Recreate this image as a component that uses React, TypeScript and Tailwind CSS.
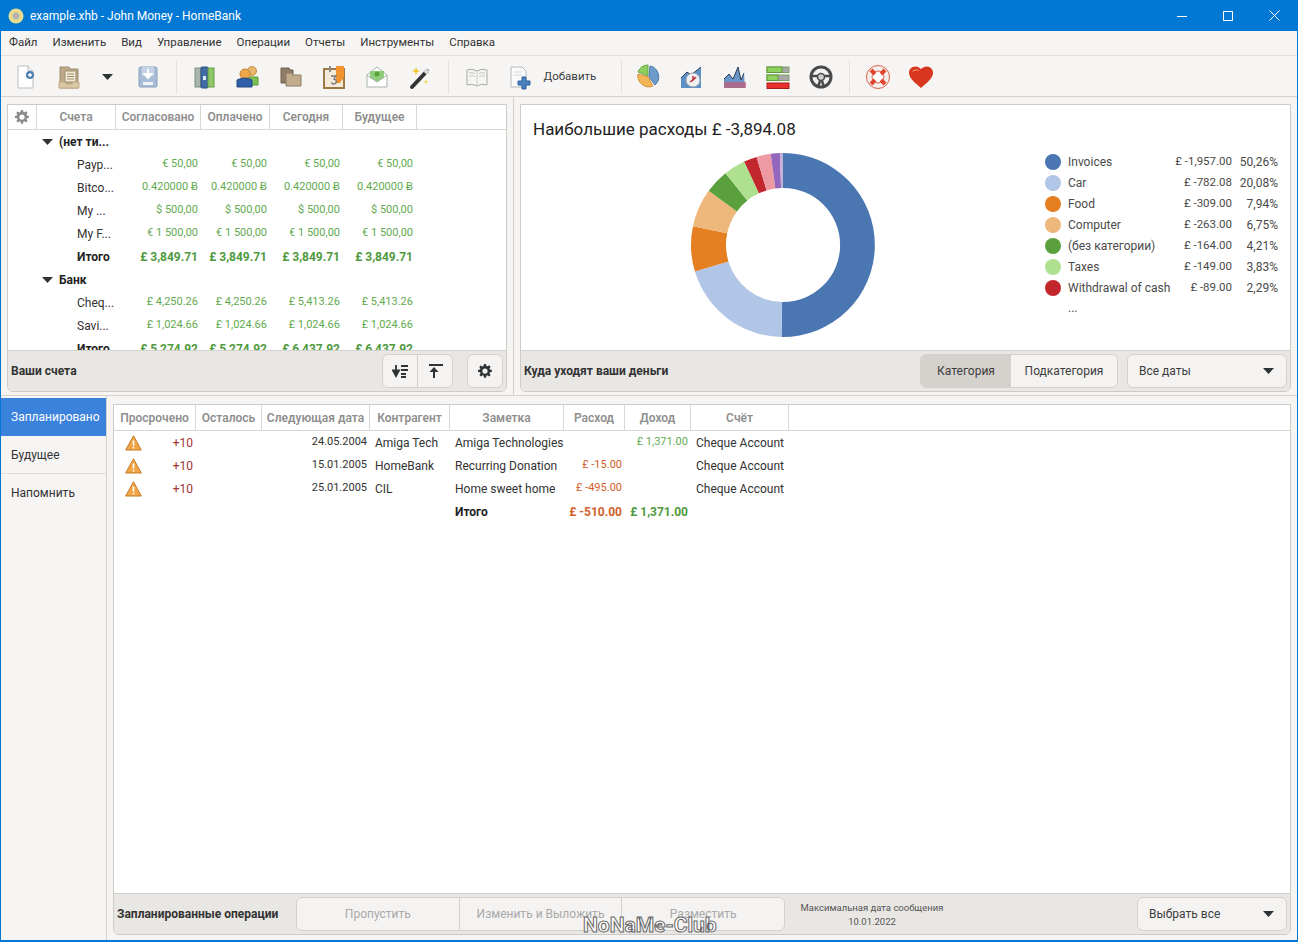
import {ReactNode} from 'react'

const FONT = "font-['Roboto','Noto_Sans',sans-serif]"

const slices = [
	{pct: 50.26, color: '#4a76b2'},
	{pct: 20.08, color: '#b1c6e6'},
	{pct: 7.94, color: '#e67e22'},
	{pct: 6.75, color: '#eeb77c'},
	{pct: 4.21, color: '#5aa03c'},
	{pct: 3.83, color: '#aee08f'},
	{pct: 2.29, color: '#c2272d'},
	{pct: 2.5, color: '#ee9aa2'},
	{pct: 1.6, color: '#9467bd'},
	{pct: 0.54, color: '#c5b0d5'},
]

const legend = [
	['Invoices', '£ -1,957.00', '50,26%', '#4a76b2'],
	['Car', '£ -782.08', '20,08%', '#b1c6e6'],
	['Food', '£ -309.00', '7,94%', '#e67e22'],
	['Computer', '£ -263.00', '6,75%', '#eeb77c'],
	['(без категории)', '£ -164.00', '4,21%', '#5aa03c'],
	['Taxes', '£ -149.00', '3,83%', '#aee08f'],
	['Withdrawal of cash', '£ -89.00', '2,29%', '#c2272d'],
]

const accounts: {name: string; vals: string[]; kind: 'group' | 'row' | 'total'}[] = [
	{name: '(нет ти...', vals: [], kind: 'group'},
	{name: 'Payp...', vals: ['€ 50,00', '€ 50,00', '€ 50,00', '€ 50,00'], kind: 'row'},
	{name: 'Bitco...', vals: ['0.420000 Ƀ', '0.420000 Ƀ', '0.420000 Ƀ', '0.420000 Ƀ'], kind: 'row'},
	{name: 'My ...', vals: ['$ 500,00', '$ 500,00', '$ 500,00', '$ 500,00'], kind: 'row'},
	{name: 'My F...', vals: ['€ 1 500,00', '€ 1 500,00', '€ 1 500,00', '€ 1 500,00'], kind: 'row'},
	{name: 'Итого', vals: ['£ 3,849.71', '£ 3,849.71', '£ 3,849.71', '£ 3,849.71'], kind: 'total'},
	{name: 'Банк', vals: [], kind: 'group'},
	{name: 'Cheq...', vals: ['£ 4,250.26', '£ 4,250.26', '£ 5,413.26', '£ 5,413.26'], kind: 'row'},
	{name: 'Savi...', vals: ['£ 1,024.66', '£ 1,024.66', '£ 1,024.66', '£ 1,024.66'], kind: 'row'},
	{name: 'Итого', vals: ['£ 5,274.92', '£ 5,274.92', '£ 6,437.92', '£ 6,437.92'], kind: 'total'},
]

const scheduled = [
	['24.05.2004', 'Amiga Tech', 'Amiga Technologies', '', '£ 1,371.00'],
	['15.01.2005', 'HomeBank', 'Recurring Donation', '£ -15.00', ''],
	['25.01.2005', 'CIL', 'Home sweet home', '£ -495.00', ''],
]

const arc = (start: number, end: number) => {
	const R = 92
	const r = 57
	const c = 94
	const p = (a: number, rad: number) => {
		const t = (a / 100) * Math.PI * 2
		return (c + rad * Math.sin(t)).toFixed(2) + ' ' + (c - rad * Math.cos(t)).toFixed(2)
	}
	const large = end - start > 50 ? 1 : 0
	return 'M' + p(start, R) + 'A92 92 0 ' + large + ' 1 ' + p(end, R) + 'L' + p(end, r) + 'A57 57 0 ' + large + ' 0 ' + p(start, r) + 'Z'
}

const Donut = () => {
	let at = 0
	return (
		<svg width="188" height="188" viewBox="0 0 188 188" className="mt-[9px] ml-[156px] block">
			{slices.map((s) => {
				const d = arc(at, at + s.pct)
				at += s.pct
				return <path key={s.color} d={d} fill={s.color} />
			})}
		</svg>
	)
}

const Caret = ({className = ''}: {className?: string}) => (
	<svg width="11" height="6" viewBox="0 0 11 6" className={className}>
		<path d="M0 0h11L5.5 6z" fill="#2e3436" />
	</svg>
)

const Gear = ({size, color}: {size: number; color: string}) => (
	<svg width={size} height={size} viewBox="0 0 16 16">
		<path
			fill={color}
			fillRule="evenodd"
			d="M6.8 0h2.4l.4 2.2 1.2.5 1.9-1.3 1.7 1.7-1.3 1.9.5 1.2 2.2.4v2.4l-2.2.4-.5 1.2 1.3 1.9-1.7 1.7-1.9-1.3-1.2.5-.4 2.2H6.8l-.4-2.2-1.2-.5-1.9 1.3-1.7-1.7 1.3-1.9-.5-1.2L0 9.200V6.800l2.2-.4.5-1.2L1.400 3.300l1.700-1.700 1.900 1.300 1.200-.5zM8 5a3 3 0 100 6 3 3 0 000-6z"
		/>
	</svg>
)

const Icon = ({children}: {children: ReactNode}) => (
	<svg width="26" height="26" viewBox="0 0 26 26">
		{children}
	</svg>
)

const Slot = ({children, className = ''}: {children: ReactNode; className?: string}) => (
	<div className={'flex h-full w-[43px] shrink-0 items-center justify-center ' + className}>{children}</div>
)

const Sep = ({className = ''}: {className?: string}) => <div className={'h-[34px] w-px shrink-0 bg-[#e3e2e0] ' + className} />

const Toolbar = () => (
	<div className="flex h-[41px] shrink-0 items-center border-b border-[#d4d2cf] pt-[2px] pl-[3.5px]">
		<Slot>
			<Icon>
				<path d="M5 2h10l5 5v17H5z" fill="#fff" stroke="#b9bcc0" />
				<path d="M15 2v5h5" fill="#eef0f2" stroke="#b9bcc0" />
				<circle cx="17" cy="11" r="4" fill="#4f7fb0" />
				<path d="M15 11h4M17 9v4" stroke="#fff" strokeWidth="1.300" />
			</Icon>
		</Slot>
		<Slot>
			<Icon>
				<path d="M4 3h9l1 2h8v19H4z" fill="#bba988" stroke="#a08d6c" />
				<rect x="9" y="7" width="11" height="11" fill="#f2ead8" stroke="#a08d6c" />
				<path d="M11 10h7M11 12.500h7M11 15h7" stroke="#a08d6c" />
				<path d="M3 18h6l1 2h6l1-2h6v6H3z" fill="#d9c8a6" stroke="#c2aa85" />
			</Icon>
		</Slot>
		<div className="flex h-full w-[33px] shrink-0 items-center justify-center">
			<Caret />
		</div>
		<Slot className="ml-[3px]">
			<Icon>
				<rect x="4" y="3" width="18" height="20" rx="1.500" fill="#a9bcd6" stroke="#8aa0bf" />
				<rect x="7" y="3" width="12" height="9" fill="#c4d2e4" />
				<path d="M13 5v8M9.500 10l3.500 4 3.500-4z" stroke="#fff" strokeWidth="2" fill="#fff" />
				<rect x="8" y="18" width="10" height="3" fill="#eef2f7" />
			</Icon>
		</Slot>
		<Sep className="ml-[6px]" />
		<Slot className="ml-[7px]">
			<Icon>
				<rect x="3" y="4" width="6" height="19" fill="#a8b4ac" stroke="#7f8d88" />
				<rect x="9" y="3" width="7" height="21" rx="1" fill="#3f6ca6" stroke="#2c4f7d" />
				<rect x="16" y="4" width="6" height="19" fill="#8fc76a" stroke="#659a46" />
				<rect x="11" y="12" width="3" height="4" fill="#dfe8f2" />
			</Icon>
		</Slot>
		<Slot>
			<Icon>
				<circle cx="17" cy="7" r="4.500" fill="#e8b56d" stroke="#c68f45" />
				<path d="M12 13h11v8H12z" fill="#7cc152" stroke="#5a9a38" />
				<circle cx="10" cy="10" r="5" fill="#eda84b" stroke="#c6812a" />
				<path d="M2 16q8-4 15 0v7H2z" fill="#2f5fa8" stroke="#24497f" />
			</Icon>
		</Slot>
		<Slot>
			<Icon>
				<path d="M3 4h8l1 2h3v13H3z" fill="#8f7d67" stroke="#6f604e" />
				<path d="M8 9h6l1 2h8v11H8z" fill="#c0ab8c" stroke="#8e7c62" />
			</Icon>
		</Slot>
		<Slot>
			<Icon>
				<rect x="3" y="5" width="20" height="19" fill="#f3ead9" stroke="#9c7a45" strokeWidth="2" />
				<path d="M15 2h8v11l-4 6h-4z" fill="#f2932e" />
				<rect x="8" y="2" width="2" height="6" fill="#8c8c8c" />
				<path d="M10 12h5l-2 3a2.500 2.500 0 11-2.500 3.500" fill="none" stroke="#777" strokeWidth="1.300" />
			</Icon>
		</Slot>
		<Slot>
			<Icon>
				<path d="M3 11l10-8 10 8v12H3z" fill="#fff" stroke="#a9b3ab" />
				<path d="M6 7h14v7l-7 4-7-4z" fill="#8fce78" />
				<circle cx="13" cy="10" r="2.500" fill="#5aa03c" />
				<path d="M3 11l10 7 10-7" fill="none" stroke="#a9b3ab" />
			</Icon>
		</Slot>
		<Slot>
			<Icon>
				<path d="M5 23L20 7" stroke="#333" strokeWidth="4" strokeLinecap="round" />
				<path d="M18 9l3-3" stroke="#d8d8d8" strokeWidth="4" />
				<path d="M9 3l1 3 3 1-3 1-1 3-1-3-3-1 3-1z" fill="#f0c419" />
				<path d="M19 15l.7 2 2 .7-2 .7-.7 2-.7-2-2-.7 2-.7z" fill="#f0d860" />
			</Icon>
		</Slot>
		<Sep className="ml-[6px]" />
		<Slot className="ml-[7px]">
			<Icon>
				<path d="M13 7Q8 4 3 6v15q5-2 10 1 5-3 10-1V6q-5-2-10 1z" fill="#f6f5f2" stroke="#a9a9a6" />
				<path d="M13 7v15M5 9q3-1 6 .5M5 12q3-1 6 .5M15 9.500q3-1.500 6-.5M15 12.500q3-1.500 6-.5" stroke="#c9c9c6" fill="none" />
			</Icon>
		</Slot>
		<Slot>
			<Icon>
				<path d="M4 3h11l4 4v16H4z" fill="#fbfbfb" stroke="#b4b8bc" />
				<path d="M7 8h8M7 11h8" stroke="#cfd6de" />
				<path d="M15 13h4v4h4v4h-4v4h-4v-4h-4v-4h4z" fill="#4a82c0" stroke="#2f619b" />
			</Icon>
		</Slot>
		<span className="ml-[2px] w-[53px] shrink-0 text-[11.5px] text-[#3d3d3d]">Добавить</span>
		<Sep className="ml-[24px]" />
		<Slot className="ml-[5.500px]">
			<Icon>
				<path d="M12 12V1A11 11 0 002 8z" fill="#8ed05f" stroke="#6aa544" />
				<path d="M14 2a11 11 0 015 19l-6-8z" fill="#6d9ccc" stroke="#4e7cab" />
				<path d="M2 10l10 3 5 9A11 11 0 012 10z" fill="#f3b455" stroke="#d2923a" />
			</Icon>
		</Slot>
		<Slot>
			<Icon>
				<path d="M2 14l6-6 4 3 10-8v21H2z" fill="#5f8fc7" />
				<path d="M2 14l6-6 4 3 10-8" fill="none" stroke="#2d3f56" />
				<circle cx="14" cy="16" r="7" fill="#eef0f2" stroke="#9aa3ac" />
				<path d="M14 12v4l-3 2M14 16l3-3" stroke="#c1272d" strokeWidth="1.500" fill="none" />
			</Icon>
		</Slot>
		<Slot>
			<Icon>
				<path d="M2 15l5-5 4 5 5-12 3 13 3-7 1 15H2z" fill="#6a93c8" />
				<path d="M2 15l5-5 4 5 5-12 3 13 3-7" fill="none" stroke="#2d3f56" />
				<path d="M2 18h22v6H2z" fill="#c2607a" fillOpacity=".75" />
			</Icon>
		</Slot>
		<Slot>
			<Icon>
				<rect x="2" y="3" width="22" height="5.500" fill="#a8a8a8" stroke="#7e9f63" />
				<rect x="2" y="3" width="15" height="5.500" fill="#8fd15e" stroke="#5f9a3d" />
				<rect x="2" y="11" width="22" height="5.500" fill="#a8a8a8" stroke="#7e9f63" />
				<rect x="2" y="11" width="11" height="5.500" fill="#8fd15e" stroke="#5f9a3d" />
				<rect x="2" y="19" width="22" height="5.500" fill="#e8302c" stroke="#a91e1b" />
			</Icon>
		</Slot>
		<Slot>
			<Icon>
				<circle cx="13" cy="13" r="10" fill="#f2f2f2" stroke="#4a4a4a" strokeWidth="3" />
				<circle cx="13" cy="13" r="3.500" fill="#cfcfcf" stroke="#4a4a4a" strokeWidth="1.500" />
				<path d="M3 12l7 0M16 12l7 0M12 17l-2 6M14 17l2 6" stroke="#4a4a4a" strokeWidth="2.500" />
			</Icon>
		</Slot>
		<Sep className="ml-[6.500px]" />
		<Slot className="ml-[7px]">
			<Icon>
				<circle cx="13" cy="13" r="9.500" fill="none" stroke="#f6f0ec" strokeWidth="6" />
				<circle cx="13" cy="13" r="11.500" fill="none" stroke="#d9634f" strokeWidth="1" />
				<circle cx="13" cy="13" r="6" fill="#fff" stroke="#d9634f" strokeWidth="1" />
				<path d="M6 6l4 4M20 6l-4 4M6 20l4-4M20 20l-4-4" stroke="#e2452e" strokeWidth="4" />
			</Icon>
		</Slot>
		<Slot>
			<Icon>
				<path d="M13 24C6 18 1 14 1 8.500 1 4 7-.5 13 5c6-5.500 12-1 12 3.500 0 5.500-5 9.500-12 15.500z" fill="#d8361e" />
				<path d="M4 8c1-3 5-4 8-1-3-1-6 0-8 1z" fill="#ef8f6a" />
			</Icon>
		</Slot>
	</div>
)

const HeadCell = ({children, className = ''}: {children?: ReactNode; className?: string}) => (
	<div className={'flex h-full items-center justify-center border-r border-[#d9d7d4] font-semibold text-[#8f8f8f] ' + className}>{children}</div>
)

const AccountsPanel = () => (
	<div className="flex h-[288px] w-[500px] shrink-0 flex-col overflow-hidden rounded-b-md border border-[#cdcbc8]">
		<div className="h-[25px] shrink-0 border-b border-[#d9d7d4] bg-white">
			<div className="grid h-full w-[409px] grid-cols-[29px_79px_85px_69px_73px_74px]">
				<HeadCell>
					<Gear size={14} color="#8a8a8a" />
				</HeadCell>
				<HeadCell>Счета</HeadCell>
				<HeadCell>Согласовано</HeadCell>
				<HeadCell>Оплачено</HeadCell>
				<HeadCell>Сегодня</HeadCell>
				<HeadCell>Будущее</HeadCell>
			</div>
		</div>
		<div className="min-h-0 flex-1 overflow-hidden bg-white">
			{accounts.map((a, i) => (
				<div key={i} className="grid h-[23px] w-[408px] grid-cols-[108px_85px_69px_73px_73px] items-center">
					{a.kind === 'group' ? (
						<div className="col-span-5 flex items-center pl-[34px] font-bold text-[#222]">
							<Caret />
							<span className="ml-[6px]">{a.name}</span>
						</div>
					) : (
						<>
							<div className={a.kind === 'total' ? 'pl-[69px] font-bold text-[#222]' : 'pl-[69px] text-[#333]'}>{a.name}</div>
							{a.vals.map((v, j) => (
								<div key={j} className={a.kind === 'total' ? 'pr-[3px] text-right font-bold text-[#4f9a3e]' : 'pr-[3px] text-right text-[11px] text-[#62aa50]'}>
									{v}
								</div>
							))}
						</>
					)}
				</div>
			))}
		</div>
		<div className="flex h-[41px] shrink-0 items-center border-t border-[#d3d1ce] bg-[#e9e7e4] pr-[3px] pl-[3px]">
			<span className="flex-1 font-bold text-[#333]">Ваши счета</span>
			<div className="flex h-[34px] w-[71px] overflow-hidden rounded-md border border-[#d3d1ce] bg-[#f4f3f1]">
				<div className="flex flex-1 items-center justify-center border-r border-[#d3d1ce]">
					<svg width="16" height="14" viewBox="0 0 16 14">
						<path d="M4 1v8M1 6.500L4 12l3-5.500zM9 2h7M9 6h7M9 10h5M9 13h5" stroke="#2e3436" strokeWidth="1.800" fill="#2e3436" />
					</svg>
				</div>
				<div className="flex flex-1 items-center justify-center">
					<svg width="15" height="14" viewBox="0 0 15 14">
						<path d="M1 1h14" stroke="#2e3436" strokeWidth="1.800" />
						<path d="M6 6v8" stroke="#2e3436" strokeWidth="2" />
						<path d="M1.500 8L6 3l4.500 5z" fill="#2e3436" />
					</svg>
				</div>
			</div>
			<div className="ml-[14px] flex h-[34px] w-[36px] items-center justify-center rounded-md border border-[#d3d1ce] bg-[#f4f3f1]">
				<Gear size={14} color="#2e3436" />
			</div>
		</div>
	</div>
)

const Select = ({label, width}: {label: string; width: string}) => (
	<div className={'flex h-[34px] items-center justify-between rounded-md border border-[#d3d1ce] bg-[#f4f3f1] pr-[12px] pl-[11px] text-[#3d3d3d] ' + width}>
		<span>{label}</span>
		<Caret />
	</div>
)

const ChartPanel = () => (
	<div className="flex h-[288px] min-w-0 flex-1 flex-col overflow-hidden rounded-b-md border border-[#cdcbc8]">
		<div className="flex min-h-0 flex-1 bg-white">
			<div className="flex-1 pt-[12px] pl-[12px]">
				<div className="h-[25px] text-[17px] leading-[25px] text-[#222]">Наибольшие расходы £ -3,894.08</div>
				<Donut />
			</div>
			<div className="w-[245px] shrink-0 pt-[46px] pr-[12px]">
				{legend.map(([name, amount, pct, color]) => (
					<div key={name} className="flex h-[21px] items-center text-[#4a4a4a]">
						<span className="h-4 w-4 shrink-0 rounded-full" style={{backgroundColor: color}} />
						<span className="ml-[7px] flex-1 whitespace-nowrap">{name}</span>
						<span className="whitespace-nowrap text-[11.5px]">{amount}</span>
						<span className="w-[46px] text-right">{pct}</span>
					</div>
				))}
				<div className="h-[21px] pl-[23px] leading-[21px] text-[#4a4a4a]">...</div>
			</div>
		</div>
		<div className="flex h-[41px] shrink-0 items-center border-t border-[#d3d1ce] bg-[#e9e7e4] pr-[3px] pl-[3px]">
			<span className="flex-1 font-bold text-[#333]">Куда уходят ваши деньги</span>
			<div className="flex h-[34px] w-[198px] overflow-hidden rounded-md border border-[#d3d1ce] text-[#3d3d3d]">
				<div className="flex w-[90px] items-center justify-center bg-[#d5d1cd]">Категория</div>
				<div className="flex flex-1 items-center justify-center bg-[#f4f3f1]">Подкатегория</div>
			</div>
			<Select label="Все даты" width="ml-[9px] w-[160px]" />
		</div>
	</div>
)

const Warn = () => (
	<svg width="17" height="16" viewBox="0 0 17 16">
		<path d="M8.500.8L16.300 15H.7z" fill="#f0a648" stroke="#c47a22" strokeLinejoin="round" />
		<path d="M8.500 5.500v5M8.500 11.800v1.600" stroke="#fff" strokeWidth="1.600" />
	</svg>
)

const SCHED_COLS = 'grid w-[675px] grid-cols-[82px_66px_108px_80px_114px_61px_66px_98px]'

const ScheduledPanel = () => (
	<div className="flex min-w-0 flex-1 flex-col overflow-hidden rounded-b-md border border-[#cdcbc8]">
		<div className="h-[26px] shrink-0 border-b border-[#d9d7d4] bg-white">
			<div className={SCHED_COLS + ' h-full'}>
				<HeadCell>Просрочено</HeadCell>
				<HeadCell>Осталось</HeadCell>
				<HeadCell>Следующая дата</HeadCell>
				<HeadCell>Контрагент</HeadCell>
				<HeadCell>Заметка</HeadCell>
				<HeadCell>Расход</HeadCell>
				<HeadCell>Доход</HeadCell>
				<HeadCell>Счёт</HeadCell>
			</div>
		</div>
		<div className="min-h-0 flex-1 bg-white">
			{scheduled.map((r) => (
				<div key={r[0]} className={SCHED_COLS + ' h-[23px] items-center text-[#333]'}>
					<div className="flex items-center justify-between pr-[3px] pl-[11px] text-[#a33232]">
						<Warn />
						<span>+10</span>
					</div>
					<div />
					<div className="pr-[3px] text-right text-[11px]">{r[0]}</div>
					<div className="pl-[5px]">{r[1]}</div>
					<div className="pl-[5px]">{r[2]}</div>
					<div className="pr-[3px] text-right text-[11px] text-[#d2602a]">{r[3]}</div>
					<div className="pr-[3px] text-right text-[11px] text-[#62aa50]">{r[4]}</div>
					<div className="pl-[5px]">Cheque Account</div>
				</div>
			))}
			<div className={SCHED_COLS + ' h-[23px] items-center font-bold'}>
				<div className="col-span-4" />
				<div className="pl-[5px] text-[#222]">Итого</div>
				<div className="pr-[3px] text-right text-[#d2602a]">£ -510.00</div>
				<div className="pr-[3px] text-right text-[#4f9a3e]">£ 1,371.00</div>
			</div>
		</div>
		<div className="flex h-[41px] shrink-0 items-center border-t border-[#d3d1ce] bg-[#e9e7e4] pr-[3px] pl-[3px]">
			<span className="w-[179px] shrink-0 font-bold text-[#333]">Запланированные операции</span>
			<div className="flex h-[34px] w-[489px] shrink-0 overflow-hidden rounded-md border border-[#d3d1ce] bg-[#f4f3f1] text-[#a9a9a9]">
				<div className="flex flex-1 items-center justify-center border-r border-[#d3d1ce]">Пропустить</div>
				<div className="flex flex-1 items-center justify-center border-r border-[#d3d1ce]">Изменить и Выложить</div>
				<div className="flex flex-1 items-center justify-center">Разместить</div>
			</div>
			<div className="ml-[14px] w-[146px] shrink-0 pt-[2px] text-center text-[9.500px] leading-[14px] text-[#555]">
				<div>Максимальная дата сообщения</div>
				<div>10.01.2022</div>
			</div>
			<div className="flex-1" />
			<Select label="Выбрать все" width="w-[150px]" />
		</div>
	</div>
)

const Sidebar = () => (
	<div className="w-[106px] shrink-0 border-r border-[#d4d2cf] pt-[2px] text-[#333]">
		<div className="flex h-[38px] items-center bg-[#3b82dc] pl-[10px] text-white">Запланировано</div>
		<div className="flex h-[38px] items-center border-b border-[#e0dedb] pl-[10px]">Будущее</div>
		<div className="flex h-[38px] items-center pl-[10px]">Напомнить</div>
	</div>
)

const App = () => {
	return (
		<div className={FONT + ' relative flex h-screen flex-col overflow-hidden border-x border-b-2 border-[#0078d4] bg-[#f6f5f4] text-[12px] whitespace-nowrap'}>
			<div className="flex h-[31px] shrink-0 items-center bg-[#0078d4] text-white">
				<svg width="16" height="16" viewBox="0 0 16 16" className="ml-[7px]">
					<circle cx="8" cy="8" r="7.500" fill="#e9dc8c" />
					<circle cx="8" cy="8" r="3.500" fill="#b9b3b0" />
				</svg>
				<span className="ml-[6px] flex-1">example.xhb - John Money - HomeBank</span>
				<div className="flex h-full">
					<div className="flex w-[46px] items-center justify-center">
						<svg width="10" height="10" viewBox="0 0 10 10">
							<path d="M0 5.500h10" stroke="#fff" />
						</svg>
					</div>
					<div className="flex w-[46px] items-center justify-center">
						<svg width="10" height="10" viewBox="0 0 10 10">
							<rect x=".5" y=".5" width="9" height="9" fill="none" stroke="#fff" />
						</svg>
					</div>
					<div className="flex w-[46px] items-center justify-center">
						<svg width="11" height="11" viewBox="0 0 11 11">
							<path d="M.5.5l10 10M10.500.5l-10 10" stroke="#fff" />
						</svg>
					</div>
				</div>
			</div>
			<div className="flex h-[25px] shrink-0 items-center gap-[15px] border-b border-[#e2e0dd] pl-[8px] text-[11.5px] text-[#333]">
				{['Файл', 'Изменить', 'Вид', 'Управление', 'Операции', 'Отчеты', 'Инструменты', 'Справка'].map((m) => (
					<span key={m}>{m}</span>
				))}
			</div>
			<Toolbar />
			<div className="flex h-[299px] shrink-0 border-b border-[#d4d2cf] pt-[7px] pl-[6px]">
				<AccountsPanel />
				<div className="mx-[6px] -mt-[7px] h-[299px] w-px shrink-0 bg-[#d4d2cf]" />
				<ChartPanel />
				<div className="w-[6px] shrink-0" />
			</div>
			<div className="flex min-h-0 flex-1">
				<Sidebar />
				<div className="flex min-w-0 flex-1 pt-[8px] pr-[6px] pb-[5px] pl-[6px]">
					<ScheduledPanel />
				</div>
			</div>
			<div className="absolute top-[910px] left-[582px] text-[21px] font-bold text-white [-webkit-text-stroke:1px_#666]">NoNaMe-Club</div>
		</div>
	)
}

export default App
